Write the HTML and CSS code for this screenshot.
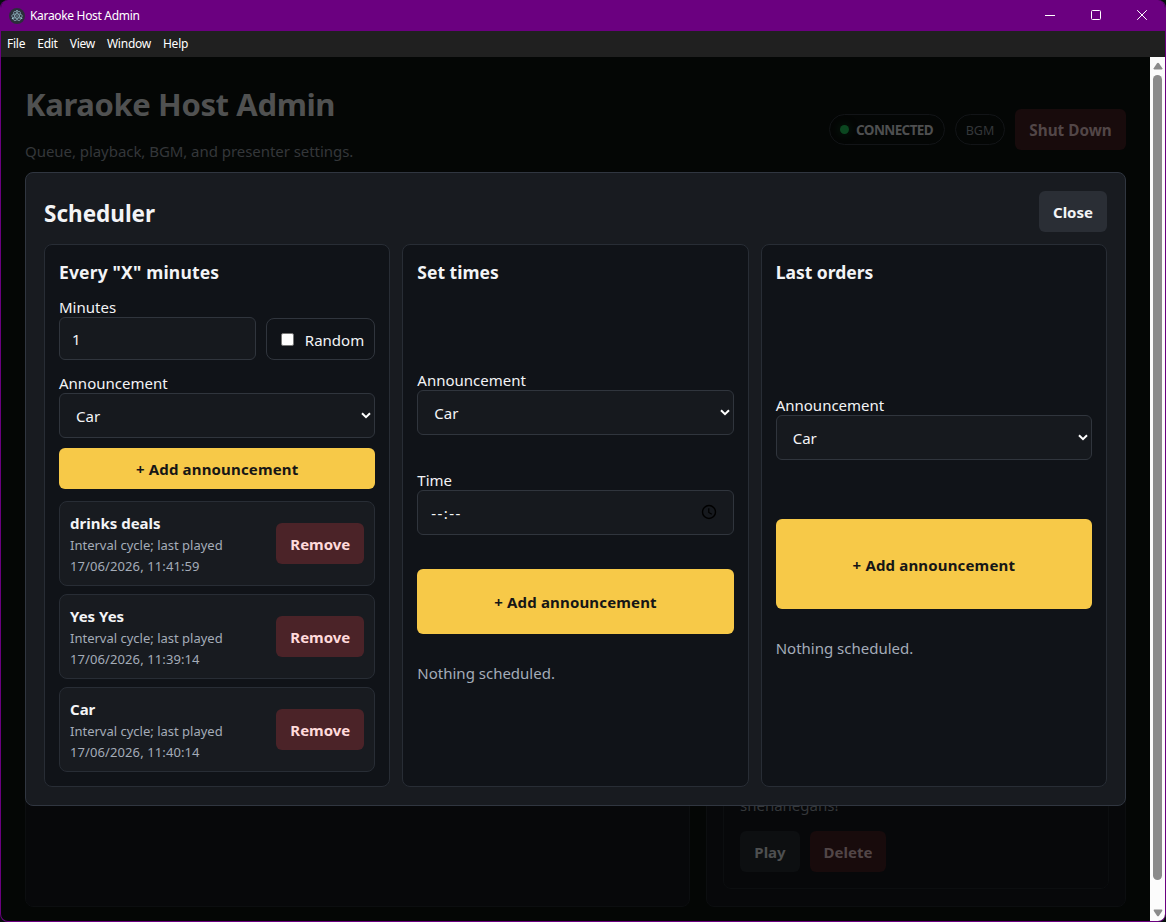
FILE: index.html
```html
<!DOCTYPE html>
<html lang="en">
<head>
<meta charset="utf-8">
<title>Karaoke Host Admin</title>
<link rel="stylesheet" href="styles.css">
</head>
<body>
<div class="window">
  <header class="titlebar">
    <svg class="app-icon" width="16" height="16" viewBox="0 0 16 16"><circle cx="8" cy="8" r="8" fill="#2b2e3a"/><g fill="none" stroke="#8fb4c0" stroke-width=".7"><ellipse cx="8" cy="8" rx="5.3" ry="2.1"/><ellipse cx="8" cy="8" rx="5.3" ry="2.1" transform="rotate(60 8 8)"/><ellipse cx="8" cy="8" rx="5.3" ry="2.1" transform="rotate(120 8 8)"/></g><g fill="#9fcbd6"><circle cx="8" cy="8" r=".7"/><circle cx="3.6" cy="10.4" r=".8"/><circle cx="12.6" cy="10.2" r=".8"/><circle cx="8" cy="2.8" r=".8"/></g></svg>
    <span class="app-name">Karaoke Host Admin</span>
    <div class="controls">
      <svg width="12" height="12" viewBox="0 0 12 12"><path d="M1 6.500h10" stroke="#fff"/></svg>
      <svg width="12" height="12" viewBox="0 0 12 12"><rect x="1.5" y="1.5" width="9" height="9" rx="1" fill="none" stroke="#fff"/></svg>
      <svg width="12" height="12" viewBox="0 0 12 12"><path d="M1.200 1.200l9.600 9.600M10.800 1.200l-9.600 9.600" stroke="#fff"/></svg>
    </div>
  </header>
  <nav class="menubar"><span>File</span><span>Edit</span><span>View</span><span>Window</span><span>Help</span></nav>
  <div class="viewport">
    <main class="page">
      <div class="masthead">
        <div class="intro">
          <h1>Karaoke Host Admin</h1>
          <p class="subtitle">Queue, playback, BGM, and presenter settings.</p>
        </div>
        <div class="status">
          <span class="pill connected"><i class="dot"></i><b>CONNECTED</b></span>
          <span class="pill bgm">BGM</span>
          <button class="btn dim-danger shutdown">Shut Down</button>
        </div>
      </div>
      <div class="panels">
        <section class="panel"></section>
        <section class="panel side">
          <div class="message">
            <p>shenanegans!</p>
            <div class="actions"><button class="btn dim play">Play</button><button class="btn dim-danger delete">Delete</button></div>
          </div>
        </section>
      </div>
      <div class="modal">
        <div class="modal-head"><h2>Scheduler</h2><button class="btn close">Close</button></div>
        <div class="cards">
          <section class="card interval">
            <h3>Every "X" minutes</h3>
            <div class="row">
              <div class="field grow"><label>Minutes</label><div class="input number">1</div></div>
              <div class="check"><i class="box"></i><span>Random</span></div>
            </div>
            <div class="field select-field">
              <label>Announcement</label>
              <div class="input select"><span>Car</span><svg width="10" height="7" viewBox="0 0 10 7"><path d="M1 1.200l4 4 4-4" fill="none" stroke="#fff" stroke-width="2"/></svg></div>
            </div>
            <button class="btn add">+ Add announcement</button>
            <div class="list">
              <div class="item"><div><strong>drinks deals</strong><small>Interval cycle; last played<br><span class="date">17/06/2026, 11:41:59</span></small></div><button class="btn remove">Remove</button></div>
              <div class="item"><div><strong>Yes Yes</strong><small>Interval cycle; last played<br><span class="date">17/06/2026, 11:39:14</span></small></div><button class="btn remove">Remove</button></div>
              <div class="item"><div><strong>Car</strong><small>Interval cycle; last played<br><span class="date">17/06/2026, 11:40:14</span></small></div><button class="btn remove">Remove</button></div>
            </div>
          </section>
          <section class="card timed">
            <h3>Set times</h3>
            <div class="field select-field">
              <label>Announcement</label>
              <div class="input select"><span>Car</span><svg width="10" height="7" viewBox="0 0 10 7"><path d="M1 1.200l4 4 4-4" fill="none" stroke="#fff" stroke-width="2"/></svg></div>
            </div>
            <div class="field time-field">
              <label>Time</label>
              <div class="input time"><span>--:--</span><svg width="16" height="16" viewBox="0 0 16 16"><circle cx="8" cy="8" r="6.500" fill="none" stroke="#000" stroke-width="1.400"/><path d="M7.800 4.200v4.200l3 1.800" fill="none" stroke="#000" stroke-width="1.200"/></svg></div>
            </div>
            <button class="btn add">+ Add announcement</button>
            <p class="empty">Nothing scheduled.</p>
          </section>
          <section class="card last">
            <h3>Last orders</h3>
            <div class="field select-field">
              <label>Announcement</label>
              <div class="input select"><span>Car</span><svg width="10" height="7" viewBox="0 0 10 7"><path d="M1 1.200l4 4 4-4" fill="none" stroke="#fff" stroke-width="2"/></svg></div>
            </div>
            <button class="btn add">+ Add announcement</button>
            <p class="empty">Nothing scheduled.</p>
          </section>
        </div>
      </div>
    </main>
    <aside class="scrollbar">
      <svg width="10" height="8" viewBox="0 0 10 8"><path d="M4 1.200q1-1 2 0l3.300 5q.3 1.300-.8 1.300h-7q-1.100 0-.8-1.300z" fill="#8b8b8b"/></svg>
      <div class="thumb"></div>
      <svg width="10" height="8" viewBox="0 0 10 8"><path d="M4 6.800q1 1 2 0l3.300-5q.3-1.300-.8-1.300h-7q-1.100 0-.8 1.300z" fill="#8b8b8b"/></svg>
    </aside>
  </div>
</div>
</body>
</html>
```
FILE: styles.css
```css
* { box-sizing: border-box; }
body { margin: 0; background: #06100d; font: 15px "Noto Sans", "Open Sans", sans-serif; color: #f3f4f6; overflow: hidden; }
h1, h2, h3, p { margin: 0; }
label, p, h1, h2, h3, span, strong, .btn { white-space: nowrap; }
.window { width: 1166px; height: 922px; display: flex; flex-direction: column; border: 1px solid #6b0080; border-top: 0; border-radius: 8px; overflow: hidden; background: #040605; }
.titlebar { height: 31px; flex: none; background: #6b0080; display: flex; align-items: center; padding: 0 17px 0 8px; }
.app-icon { margin-right: 5px; }
.app-name { font-size: 12px; letter-spacing: -0.32px; color: #fff; }
.controls { margin-left: auto; display: flex; gap: 34px; }
.controls svg { margin-top: -1px; }
.menubar { height: 26px; flex: none; background: #202020; display: flex; gap: 12px; padding: 0 0 2px 6px; align-items: center; font-size: 12px; letter-spacing: -0.25px; color: #fff; }
.viewport { flex: 1; display: flex; min-height: 0; }
.page { position: relative; flex: 1; padding: 26px 24px 0; display: flex; flex-direction: column; }
.masthead { display: flex; justify-content: space-between; height: 101px; }
h1 { font-size: 31px; letter-spacing: -0.38px; line-height: 42px; color: #505151; }
.subtitle { margin-top: 15px; line-height: 22px; letter-spacing: -0.05px; color: #34373a; }
.status { display: flex; align-items: center; gap: 10px; height: 41px; margin-top: 26px; }
.pill { height: 31px; border: 1px solid #121417; border-radius: 16px; display: flex; align-items: center; color: #34373a; font-size: 12.5px; }
.connected { width: 116px; padding-left: 10px; color: #4e4f50; }
.connected b { font-size: 13.5px; letter-spacing: -0.6px; }
.dot { width: 9px; height: 9px; border-radius: 50%; background: #0b4720; box-shadow: 0 0 8px #06200f; margin-right: 7px; }
.bgm { width: 50px; justify-content: center; padding-top: 1px; }
.btn { border: 0; border-radius: 6px; height: 41px; padding: 0; font: bold 15px "Noto Sans", "Open Sans", sans-serif; color: #f3f4f6; background: #2a2e35; }
.dim { background: #0d0f11; color: #4e4f50; }
.dim-danger { background: #180b0c; color: #524647; }
.shutdown { width: 111px; font-size: 15.3px; }
.panels { display: grid; grid-template-columns: 665px 420px; gap: 16px; flex: 1; padding-bottom: 14px; }
.panel { border: 1px solid #0c0e10; border-radius: 8px; background: #07080a; }
.side { padding: 17px 16px; display: flex; }
.message { flex: 1; border: 1px solid #0c0e10; border-radius: 8px; background: #07080a; padding: 16px; display: flex; flex-direction: column; justify-content: flex-end; color: #34373a; }
.message p { line-height: 22px; margin-bottom: 15px; }
.actions { display: flex; gap: 10px; }
.play { width: 60px; }
.delete { width: 76px; }
.modal { position: absolute; left: 24px; top: 115px; width: 1101px; height: 634px; border: 1px solid #303640; border-radius: 8px; background: #181b20; padding: 18px; display: flex; flex-direction: column; gap: 12px; }
.modal-head { display: flex; justify-content: space-between; align-items: center; height: 41px; }
h2 { font-size: 22.5px; line-height: 32px; padding-top: 4px; }
.close { width: 68px; }
.cards { flex: 1; display: grid; grid-template-columns: repeat(3, 1fr); gap: 12px; }
.card { border: 1px solid #282d35; border-radius: 8px; background: #101318; padding: 14px; display: flex; flex-direction: column; min-width: 0; }
h3 { font-size: 17.5px; line-height: 27px; }
.interval h3 { letter-spacing: 0.16px; }
.field { display: flex; flex-direction: column; }
label { line-height: 20px; height: 20px; }
.row { display: flex; align-items: flex-end; gap: 10px; margin-top: 11px; }
.grow { flex: 1; }
.input { height: 45px; border: 1px solid #30353d; border-radius: 6px; background: #16191e; display: flex; align-items: center; }
.number { height: 43px; padding-left: 12px; }
.check { width: 109px; height: 42px; border: 1px solid #30353d; border-radius: 8px; display: flex; align-items: center; padding: 2px 0 0 14px; }
.box { width: 13px; height: 13px; background: #fff; border: 1px solid #767676; border-radius: 2px; margin: -2px 10.5px 0 0; }
.select { justify-content: space-between; padding: 0 3px 0 16px; }
.select-field { margin-top: 13px; }
.add { flex: none; background: #f7c948; color: #161616; margin-top: 10px; letter-spacing: 0.16px; }
.list { margin-top: 12px; display: flex; flex-direction: column; gap: 8px; }
.item { height: 85px; border: 1px solid #282d35; border-radius: 8px; background: #181b20; padding: 2px 10px 0; display: flex; align-items: center; justify-content: space-between; }
.item strong { display: block; line-height: 21px; }
.item small { display: block; font-size: 13px; line-height: 21px; color: #a4acb8; padding-top: 1px; }
.date { letter-spacing: 0.1px; }
.remove { width: 88px; background: #4b2328; color: #ffdadb; margin-top: -2px; }
.timed .select-field { margin-top: 84px; }
.time-field { margin-top: 35px; }
.time { justify-content: space-between; padding: 0 16px 0 13px; }
.time span { letter-spacing: 1.4px; }
.time svg { margin-top: -1px; }
.timed .add { height: 65px; margin-top: 34px; }
.empty { color: #a4acb8; line-height: 22px; margin-top: 28px; }
.last .select-field { margin-top: 109px; }
.last .add { height: 90px; margin-top: 59px; padding-top: 2px; }
.scrollbar { width: 15px; background: #fcfcfc; display: flex; flex-direction: column; align-items: center; padding: 5px 0 4px; }
.thumb { width: 9px; height: 805px; border-radius: 5px; background: #8b8b8b; margin: 5px 0 auto; }
```
